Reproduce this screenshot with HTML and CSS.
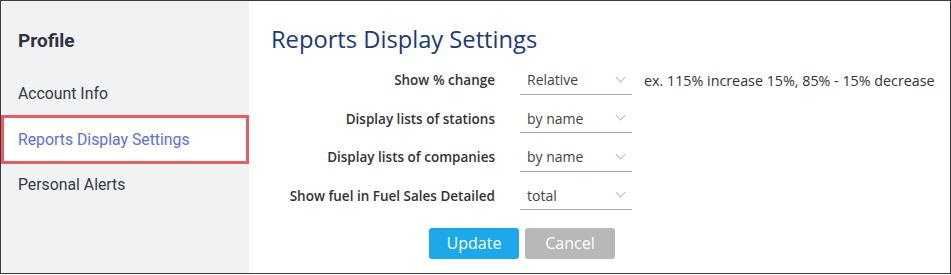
FILE: index.html
```html
<!DOCTYPE html>
<html>
<head>
	<title>Profile</title>
	<link rel="stylesheet" href="styles.css">
</head>
<body>
<div class="frame">
	<div class="sidebar">
		<div class="side-title">Profile</div>
		<a href="javascript:;" class="side-item">Account Info</a>
		<a href="javascript:;" class="side-item active">Reports Display Settings</a>
		<a href="javascript:;" class="side-item">Personal Alerts</a>
	</div>
	<div class="content">
		<h1 class="title">Reports Display Settings</h1>
		<div class="form">
			<div class="row">
				<label class="label">Show % change</label>
				<div class="select"><span>Relative</span><i class="chev"></i></div>
				<span class="hint">ex. 115% increase 15%, 85% - 15% decrease</span>
			</div>
			<div class="row">
				<label class="label">Display lists of stations</label>
				<div class="select"><span>by name</span><i class="chev"></i></div>
			</div>
			<div class="row">
				<label class="label">Display lists of companies</label>
				<div class="select"><span>by name</span><i class="chev"></i></div>
			</div>
			<div class="row">
				<label class="label">Show fuel in Fuel Sales Detailed</label>
				<div class="select"><span>total</span><i class="chev"></i></div>
			</div>
			<div class="buttons">
				<a href="javascript:;" class="btn btn-update">Update</a>
				<a href="javascript:;" class="btn btn-cancel">Cancel</a>
			</div>
		</div>
	</div>
</div>
</body>
</html>
```

FILE: styles.css
```css
*{margin: 0; padding: 0; text-decoration: none; box-sizing: border-box;}
body{ background: #fff; }
.frame{
	width: 951px; height: 274px;
	border: 1px solid #3c3c3c;
	display: flex;
}
.sidebar{
	width: 248px;
	background: #f1f2f4;
	font-family: Roboto, "Liberation Sans", sans-serif;
	padding-top: 28px;
}
.side-title{
	font-weight: bold; font-size: 19px;
	color: #2d3340;
	line-height: 24px;
	padding-left: 17px;
	margin-bottom: 18px;
}
.side-item{
	display: block;
	height: 45.5px; line-height: 45px;
	margin: 0 2px;
	padding-left: 15px;
	font-size: 15.8px;
	color: #333a44;
}
.side-item.active{
	background: #fff;
	color: #5a6ee8;
	outline: 3px solid #eb5c60;
	outline-offset: -1px;
}
.content{
	flex: 1;
	font-family: "Open Sans", sans-serif;
	padding: 22px 0 0 22px;
}
.title{
	font-weight: normal;
	font-size: 23.7px;
	color: #1b3a78;
	line-height: 32px;
}
.form{ padding-top: 6px; }
.row{
	display: flex; align-items: center;
	height: 38.5px;
}
.label{
	width: 249px;
	text-align: right;
	font-size: 13.5px; font-weight: 600;
	color: #333;
	padding-right: 25px;
}
.select{
	width: 112px; height: 29px;
	border-bottom: 1px solid #aaa;
	display: flex; align-items: center; justify-content: space-between;
	padding: 0 8px 0 7px;
	font-size: 14px; color: #444;
}
.chev{
	width: 7px; height: 7px;
	border-right: 1px solid #bbb; border-bottom: 1px solid #bbb;
	transform: rotate(45deg);
	margin-top: -5px;
}
.hint{
	margin-left: 12px;
	font-size: 14.3px; color: #333;
}
.buttons{
	display: flex; gap: 6px;
	padding: 13px 0 0 158px;
}
.btn{
	width: 90px; height: 31px; line-height: 31px;
	text-align: center;
	border-radius: 3px;
	font-size: 16px; color: #fff;
}
.btn-update{ background: #1ba9ec; }
.btn-cancel{ background: #b8b8b8; }
```
